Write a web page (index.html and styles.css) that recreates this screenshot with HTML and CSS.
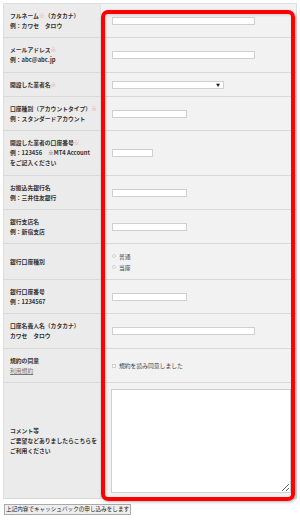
FILE: index.html
```html
<!DOCTYPE html>
<html lang="ja">
<head>
  <meta charset="UTF-8">
  <meta name="viewport" content="width=device-width, initial-scale=1.0">
  <title>キャッシュバック申し込み</title>
  <link rel="stylesheet" href="styles.css">
</head>
<body>
  <form class="entry">
    <table class="entry-table">
      <tr>
        <th>フルネーム<span class="req">※</span>（カタカナ）<br>例：カワセ　タロウ</th>
        <td><input type="text" class="field field-long"></td>
      </tr>
      <tr class="row-m">
        <th>メールアドレス<span class="req">※</span><br>例：abc@abc.jp</th>
        <td><input type="text" class="field field-long"></td>
      </tr>
      <tr class="row-s">
        <th>開設した業者名<span class="req">※</span></th>
        <td><div class="select">▼</div></td>
      </tr>
      <tr>
        <th>口座種別（アカウントタイプ）<span class="req">※</span><br>例：スタンダードアカウント</th>
        <td><input type="text" class="field field-mid"></td>
      </tr>
      <tr class="row-l">
        <th>開設した業者の口座番号<span class="req">※</span><br>例：123456　※MT4 Account<br>をご記入ください</th>
        <td><input type="text" class="field field-short"></td>
      </tr>
      <tr>
        <th>お振込先銀行名<br>例：三井住友銀行</th>
        <td><input type="text" class="field field-mid"></td>
      </tr>
      <tr>
        <th>銀行支店名<br>例：新宿支店</th>
        <td><input type="text" class="field field-mid"></td>
      </tr>
      <tr class="row-r">
        <th>銀行口座種別</th>
        <td>
          <label class="choice"><span class="radio"></span>普通</label>
          <label class="choice"><span class="radio"></span>当座</label>
        </td>
      </tr>
      <tr>
        <th>銀行口座番号<br>例：1234567</th>
        <td><input type="text" class="field field-mid"></td>
      </tr>
      <tr class="row-m">
        <th>口座名義人名（カタカナ）<br>カワセ　タロウ</th>
        <td><input type="text" class="field field-long"></td>
      </tr>
      <tr>
        <th>規約の同意<br><a href="#" class="terms">利用規約</a></th>
        <td><label class="choice"><span class="check"></span>規約を読み同意しました</label></td>
      </tr>
      <tr class="row-xl">
        <th>コメント等<br>ご要望などありましたらこちらを<br>ご利用ください</th>
        <td class="cell-top"><textarea class="comment"></textarea></td>
      </tr>
    </table>

    <!-- red highlight drawn over the input column -->
    <div class="frame"></div>

    <button type="submit" class="submit">上記内容でキャッシュバックの申し込みをします</button>
  </form>
</body>
</html>
```

FILE: styles.css
```css
body {
  margin: 0;
  background-color: #fff;
  font-family: "Noto Sans CJK JP", "Noto Sans", sans-serif;
  color: #333;
}
.entry {
  position: relative;
  padding: 3px 3px 0 3px;
}
.entry-table {
  width: 294px;
  border-collapse: collapse;
  border: 1px solid #dedede;
}
.entry-table tr {
  height: 34px;
}
.entry-table .row-s {
  height: 24px;
}
.entry-table .row-m {
  height: 35px;
}
.entry-table .row-r {
  height: 36px;
}
.entry-table .row-l {
  height: 45px;
}
.entry-table .row-xl {
  height: 116px;
}
.entry-table th {
  width: 90px;
  padding: 0 0 0 6px;
  background-color: #ebebeb;
  border-bottom: 1px solid #d9d9d9;
  border-right: 1px solid #e2e2e2;
  text-align: left;
  vertical-align: middle;
  font-size: 5.8px;
  line-height: 10px;
  font-weight: bold;
  color: #333;
  white-space: nowrap;
}
.entry-table td {
  padding: 0 0 0 11px;
  background-color: #f2f2f2;
  border-bottom: 1px solid #d9d9d9;
  vertical-align: middle;
  font-size: 5.8px;
  line-height: 11px;
}
.entry-table .cell-top {
  padding-left: 10px;
}
.req {
  color: #f58c8c;
}
.terms {
  color: #777;
  font-weight: normal;
}
.field {
  display: block;
  height: 8px;
  padding: 0;
  border: 1px solid #cfcfcf;
  background-color: #fff;
  box-sizing: border-box;
}
.field-long {
  width: 143px;
}
.field-mid {
  width: 75px;
}
.field-short {
  width: 41px;
}
.select {
  width: 112px;
  height: 8px;
  box-sizing: border-box;
  border: 1px solid #cfcfcf;
  background-color: #fff;
  font-size: 4px;
  line-height: 6px;
  text-align: right;
  padding-right: 3px;
  color: #111;
}
.choice {
  display: flex;
  align-items: center;
  gap: 3px;
  color: #444;
}
.radio, .check {
  width: 2px;
  height: 2px;
  border: 1px solid #cfcfcf;
  background-color: #fff;
}
.radio {
  border-radius: 50%;
}
.comment {
  display: block;
  width: 180px;
  height: 104px;
  margin: 0;
  padding: 0;
  border: 1px solid #cfcfcf;
  background-color: #fff;
  box-sizing: border-box;
  resize: both;
}
.frame {
  position: absolute;
  left: 101px;
  top: 10px;
  width: 194px;
  height: 491px;
  box-sizing: border-box;
  border: 4px solid #ff0000;
  border-radius: 7px;
  box-shadow: 1px 1px 3px rgba(0, 0, 0, 0.3), inset 1px 1px 3px rgba(0, 0, 0, 0.15);
  pointer-events: none;
}
.submit {
  display: block;
  margin: 5px 0 0 1px;
  padding: 0 1px;
  height: 11px;
  font-family: "Noto Sans CJK JP", sans-serif;
  font-size: 5.6px;
  line-height: 9px;
  color: #222;
  background-color: #eee;
  border: 1px solid #aaa;
}
```
